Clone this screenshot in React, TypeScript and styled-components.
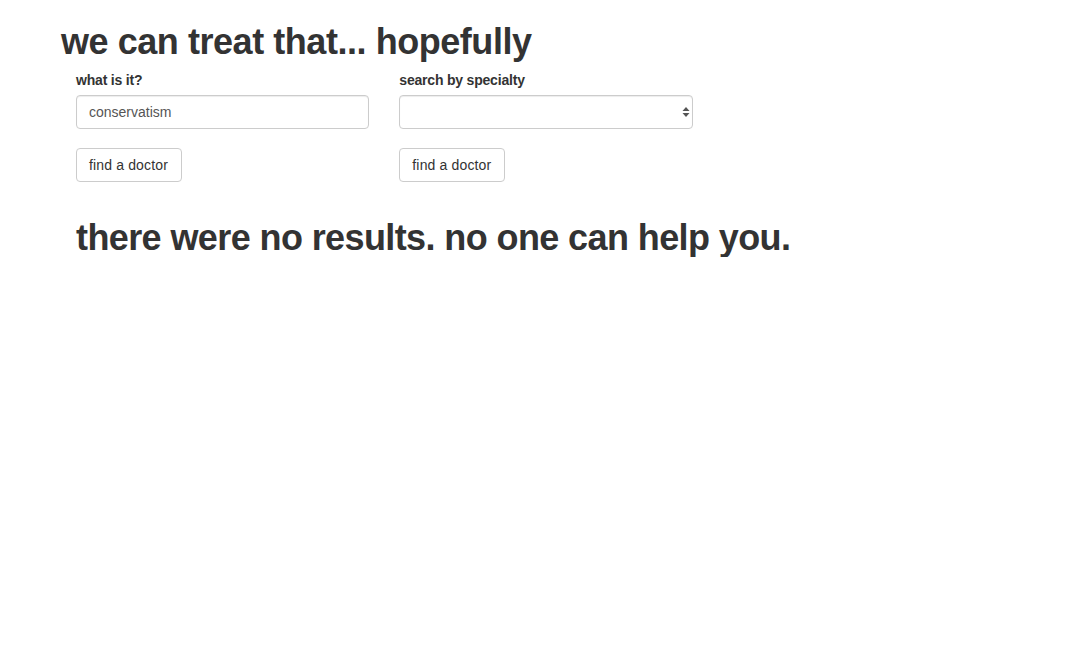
import React from "react";
import styled, { createGlobalStyle } from "styled-components";

const Global = createGlobalStyle`
  html, body { margin: 0; padding: 0; background: #fff; }
  body {
    font-family: "Liberation Sans", Arial, sans-serif;
    font-size: 14px;
    line-height: 1.42857;
    color: #333;
  }
  * { box-sizing: border-box; }
`;

const Page = styled.div`
  width: 970px;
  margin: 0 auto;
`;

const Title = styled.h1`
  margin: 22px 0 8px;
  font-size: 36px;
  line-height: 1.1;
  font-weight: 700;
  letter-spacing: -0.45px;
  color: #333;
`;

const Inner = styled.div`
  padding: 0 15px;
`;

const Row = styled.div`
  display: grid;
  grid-template-columns: repeat(3, 323.33px);
  margin: 0 -15px;
`;

const Col = styled.form`
  padding: 0 15px;
  display: flex;
  flex-direction: column;
  align-items: flex-start;
`;

const Label = styled.label`
  font-weight: 700;
  font-size: 14px;
  line-height: 20px;
  margin-bottom: 5px;
  letter-spacing: -0.2px;
`;

const Field = styled.div`
  position: relative;
  width: 100%;
`;

const Input = styled.input`
  display: block;
  width: 100%;
  height: 34px;
  padding: 6px 12px;
  font-family: inherit;
  font-size: 14px;
  color: #555;
  background: #fff;
  border: 1px solid #ccc;
  border-radius: 4px;
  box-shadow: inset 0 1px 1px rgba(0, 0, 0, 0.075);
  outline: none;
`;

const Select = styled.select`
  display: block;
  width: 100%;
  height: 34px;
  padding: 6px 12px;
  font-family: inherit;
  font-size: 14px;
  color: #555;
  background: #fff;
  border: 1px solid #ccc;
  border-radius: 4px;
  box-shadow: inset 0 1px 1px rgba(0, 0, 0, 0.075);
  appearance: none;
  -webkit-appearance: none;
  outline: none;
`;

const Arrows = styled.svg`
  position: absolute;
  right: 3px;
  top: 11px;
  width: 8px;
  height: 12px;
  pointer-events: none;
`;

const Button = styled.button`
  margin-top: 19px;
  height: 34px;
  padding: 6px 13px 6px 12px;
  font-family: inherit;
  font-size: 14px;
  line-height: 20px;
  letter-spacing: 0.15px;
  color: #333;
  background: #fff;
  border: 1px solid #ccc;
  border-radius: 4px;
  cursor: pointer;
`;

const Result = styled.h1`
  margin: 36px 0 0;
  font-size: 36px;
  line-height: 1.1;
  font-weight: 700;
  letter-spacing: -0.6px;
  color: #333;
`;

export default function App() {
  return (
    <>
      <Global />
      <Page>
        <Title>we can treat that... hopefully</Title>
        <Inner>
          <Row>
            <Col onSubmit={(e) => e.preventDefault()}>
              <Label>what is it?</Label>
              <Field>
                <Input defaultValue="conservatism" />
              </Field>
              <Button type="submit">find a doctor</Button>
            </Col>
            <Col onSubmit={(e) => e.preventDefault()}>
              <Label>search by specialty</Label>
              <Field>
                <Select defaultValue="">
                  <option value=""></option>
                </Select>
                <Arrows viewBox="0 0 8 12">
                  <path d="M4 1 L7.5 5 L0.5 5 Z" fill="#555" />
                  <path d="M4 11 L7.5 7 L0.5 7 Z" fill="#555" />
                </Arrows>
              </Field>
              <Button type="submit">find a doctor</Button>
            </Col>
          </Row>
          <Result>there were no results. no one can help you.</Result>
        </Inner>
      </Page>
    </>
  );
}
